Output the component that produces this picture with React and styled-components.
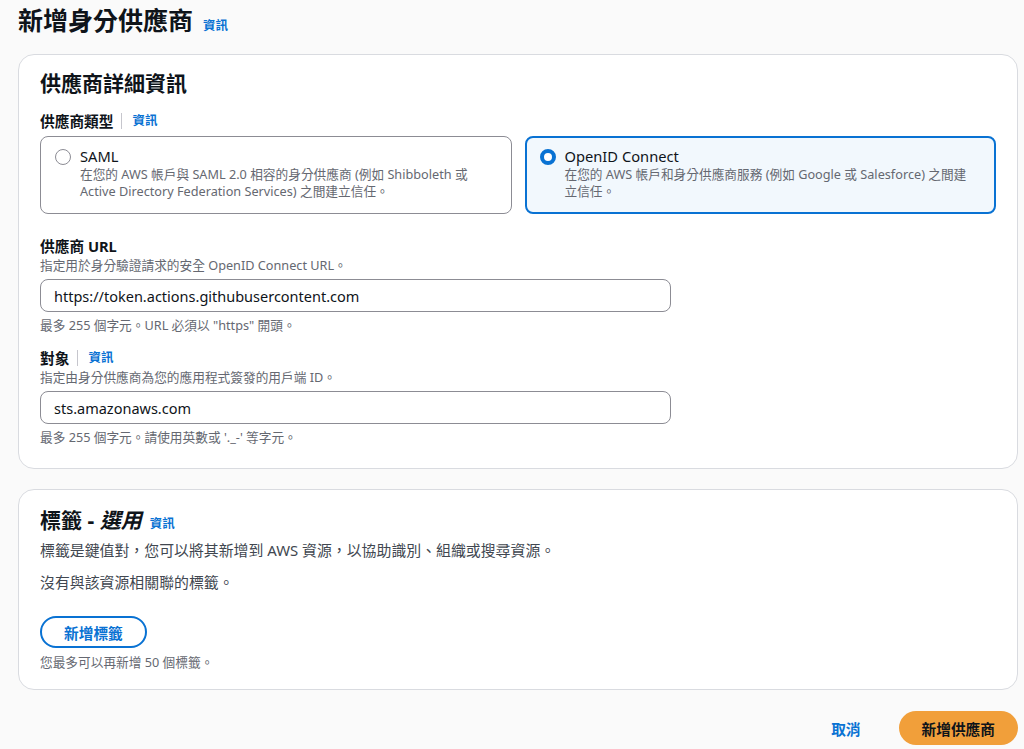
import React from 'react';
import styled, { createGlobalStyle } from 'styled-components';

const GlobalStyle = createGlobalStyle`
  html, body {
    margin: 0;
    padding: 0;
    background: #fafafa;
  }
  body {
    font-family: "Noto Sans", "Noto Sans CJK TC", sans-serif;
    color: #0f141a;
  }
`;

const Page = styled.div`
  width: 1000px;
  padding: 4px 0 0 18px;
  display: flex;
  flex-direction: column;
`;

const PageHeader = styled.div`
  display: flex;
  align-items: baseline;
  gap: 10px;
  margin-bottom: 18px;
`;

const PageTitle = styled.h1`
  margin: 0;
  font-size: 25px;
  line-height: 32px;
  font-weight: 700;
  color: #0f141a;
`;

const InfoLink = styled.a`
  font-size: 12.5px;
  font-weight: 700;
  color: #0972d3;
  text-decoration: none;
  cursor: pointer;
`;

const Card = styled.section`
  background: #fff;
  border: 1px solid #d9dbe0;
  border-radius: 16px;
  padding: ${p => p.$pad};
  margin-bottom: ${p => p.$mb || '22px'};
  display: flex;
  flex-direction: column;
`;

const CardTitle = styled.h2`
  margin: 0;
  font-size: 21px;
  line-height: 26px;
  font-weight: 700;
  display: flex;
  align-items: baseline;
  gap: 8px;

  em {
    font-style: italic;
  }
`;

const Label = styled.div`
  font-size: 14.7px;
  line-height: 20px;
  font-weight: 700;
  display: flex;
  align-items: center;
`;

const Divider = styled.span`
  width: 1px;
  height: 16px;
  background: #c6c6cd;
  margin: 0 10px 0 8px;
`;

const Desc = styled.div`
  font-size: 12.7px;
  line-height: ${p => p.$lh || '18px'};
  color: #656871;
`;

const Tiles = styled.div`
  display: grid;
  grid-template-columns: 1fr 1fr;
  gap: 13px;
  margin-top: 5px;
`;

const Tile = styled.label`
  display: flex;
  align-items: flex-start;
  gap: 9px;
  height: 78px;
  box-sizing: border-box;
  padding: ${p => (p.$active ? '9px 20px 9px 13px' : '10px 21px 10px 14px')};
  border-radius: 8px;
  border: ${p => (p.$active ? '2px solid #0972d3' : '1px solid #8c8c94')};
  background: ${p => (p.$active ? '#f2f8fd' : '#fff')};
  cursor: pointer;
`;

const Radio = styled.span`
  flex: none;
  width: 16px;
  height: 16px;
  margin-top: 2px;
  border-radius: 50%;
  box-sizing: border-box;
  border: ${p => (p.$checked ? '4px solid #0972d3' : '1.5px solid #8c8c94')};
  background: #fff;
`;

const TileBody = styled.div`
  display: flex;
  flex-direction: column;
`;

const TileTitle = styled.div`
  font-size: 14.7px;
  line-height: 19px;
  color: #0f141a;
`;

const Field = styled.div`
  display: flex;
  flex-direction: column;
  margin-top: ${p => p.$mt};
`;

const Input = styled.input`
  width: 631px;
  height: 33px;
  box-sizing: border-box;
  margin: 5px 0 4px;
  padding: 0 13px;
  border: 1px solid #8c8c94;
  border-radius: 8px;
  font-family: inherit;
  font-size: 14.5px;
  color: #0f141a;
  background: #fff;
  outline: none;
`;

const BodyText = styled.p`
  margin: ${p => p.$m || '0'};
  font-size: 14.9px;
  line-height: 20px;
  color: #414750;
`;

const OutlineButton = styled.button`
  align-self: flex-start;
  height: 32px;
  padding: 0 22px;
  border: 2px solid #0972d3;
  border-radius: 20px;
  background: #fff;
  color: #0972d3;
  font-family: inherit;
  font-size: 14.7px;
  font-weight: 700;
  margin: 24px 0 5px;
`;

const Footer = styled.div`
  display: flex;
  justify-content: flex-end;
  align-items: center;
  gap: 18px;
`;

const TextButton = styled.button`
  border: none;
  background: none;
  padding: 0 20px;
  color: #0972d3;
  font-family: inherit;
  font-size: 14.7px;
  font-weight: 700;
`;

const PrimaryButton = styled.button`
  height: 34px;
  padding: 0 23px;
  border: none;
  border-radius: 20px;
  background: #f19f3a;
  color: #0f141a;
  font-family: inherit;
  font-size: 14.7px;
  font-weight: 700;
`;

export default function App() {
  return (
    <>
      <GlobalStyle />
      <Page>
        <PageHeader>
          <PageTitle>新增身分供應商</PageTitle>
          <InfoLink>資訊</InfoLink>
        </PageHeader>

        <Card $pad="15px 21px 22px" $mb="20px">
          <CardTitle>供應商詳細資訊</CardTitle>
          <Field $mt="15px">
            <Label>
              供應商類型<Divider />
              <InfoLink>資訊</InfoLink>
            </Label>
            <Tiles>
              <Tile>
                <Radio />
                <TileBody>
                  <TileTitle>SAML</TileTitle>
                  <Desc $lh="17px">
                    在您的 AWS 帳戶與 SAML 2.0 相容的身分供應商 (例如 Shibboleth 或 Active Directory Federation Services) 之間建立信任。
                  </Desc>
                </TileBody>
              </Tile>
              <Tile $active>
                <Radio $checked />
                <TileBody>
                  <TileTitle>OpenID Connect</TileTitle>
                  <Desc $lh="17px">
                    在您的 AWS 帳戶和身分供應商服務 (例如 Google 或 Salesforce) 之間建立信任。
                  </Desc>
                </TileBody>
              </Tile>
            </Tiles>
          </Field>

          <Field $mt="22px">
            <Label>供應商 URL</Label>
            <Desc>指定用於身分驗證請求的安全 OpenID Connect URL。</Desc>
            <Input readOnly value="https://token.actions.githubusercontent.com" />
            <Desc>最多 255 個字元。URL 必須以 "https" 開頭。</Desc>
          </Field>

          <Field $mt="14px">
            <Label>
              對象<Divider />
              <InfoLink>資訊</InfoLink>
            </Label>
            <Desc>指定由身分供應商為您的應用程式簽發的用戶端 ID。</Desc>
            <Input readOnly value="sts.amazonaws.com" />
            <Desc>最多 255 個字元。請使用英數或 '._-' 等字元。</Desc>
          </Field>
        </Card>

        <Card $pad="17px 21px 18px" $mb="21px">
          <CardTitle>
            <span>
              標籤 - <em>選用</em>
            </span>
            <InfoLink>資訊</InfoLink>
          </CardTitle>
          <BodyText $m="3px 0 0">標籤是鍵值對，您可以將其新增到 AWS 資源，以協助識別、組織或搜尋資源。</BodyText>
          <BodyText $m="12px 0 0">沒有與該資源相關聯的標籤。</BodyText>
          <OutlineButton>新增標籤</OutlineButton>
          <Desc>您最多可以再新增 50 個標籤。</Desc>
        </Card>

        <Footer>
          <TextButton>取消</TextButton>
          <PrimaryButton>新增供應商</PrimaryButton>
        </Footer>
      </Page>
    </>
  );
}
